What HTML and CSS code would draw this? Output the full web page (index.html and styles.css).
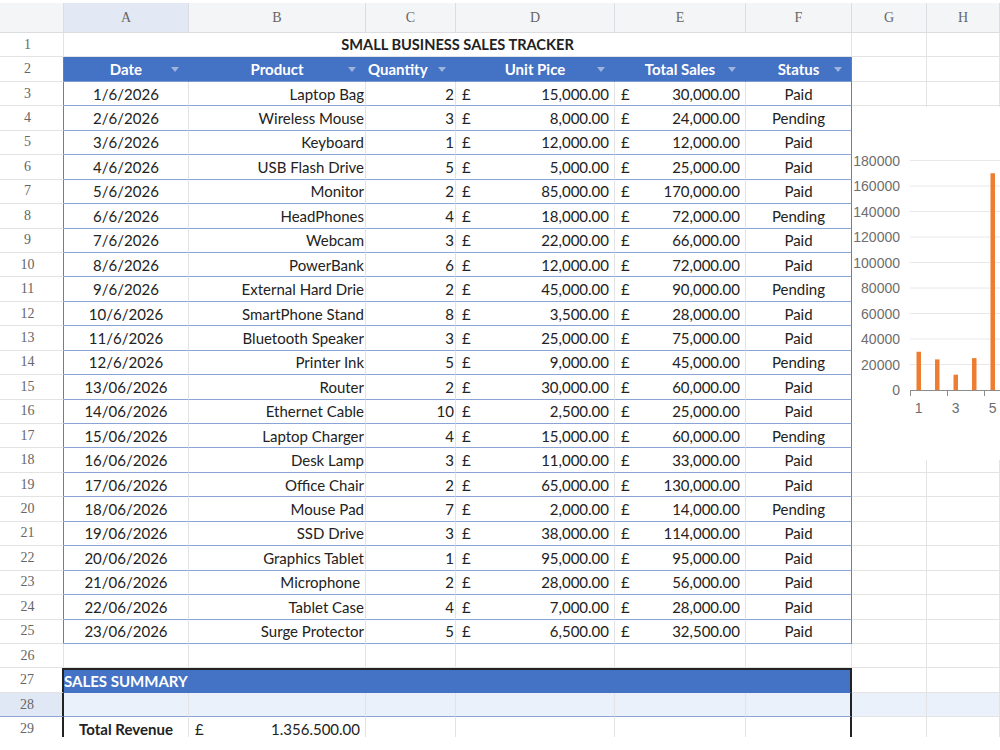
FILE: index.html
```html
<!DOCTYPE html>
<html>
<head>
  <meta charset="UTF-8">
  <title>Small Business Sales Tracker</title>
  <link rel="stylesheet" href="styles.css">
</head>
<body>
  <div class="sheet">
    <div class="row cols">
      <div class="rh"></div>
      <div class="sel">A</div><div>B</div><div>C</div><div>D</div><div>E</div><div>F</div><div>G</div><div>H</div>
    </div>

    <div class="row">
      <div class="rh">1</div>
      <div class="title">SMALL BUSINESS SALES TRACKER</div>
      <div></div><div></div>
    </div>

    <div class="row head">
      <div class="rh">2</div>
      <div>Date<i class="dd"></i></div>
      <div>Product<i class="dd"></i></div>
      <div class="squeeze">Quantity<i class="dd"></i></div>
      <div>Unit Pice<i class="dd"></i></div>
      <div>Total Sales<i class="dd"></i></div>
      <div class="f">Status<i class="dd"></i></div>
      <div></div><div></div>
    </div>

    <div class="row data"><div class="rh">3</div><div class="c">1/6/2026</div><div class="r">Laptop Bag</div><div class="r">2</div><div class="m"><span>£</span><span>15,000.00</span></div><div class="m"><span>£</span><span>30,000.00</span></div><div class="c f">Paid</div><div></div><div></div></div>
    <div class="row data"><div class="rh">4</div><div class="c">2/6/2026</div><div class="r">Wireless Mouse</div><div class="r">3</div><div class="m"><span>£</span><span>8,000.00</span></div><div class="m"><span>£</span><span>24,000.00</span></div><div class="c f">Pending</div><div></div><div></div></div>
    <div class="row data"><div class="rh">5</div><div class="c">3/6/2026</div><div class="r">Keyboard</div><div class="r">1</div><div class="m"><span>£</span><span>12,000.00</span></div><div class="m"><span>£</span><span>12,000.00</span></div><div class="c f">Paid</div><div></div><div></div></div>
    <div class="row data"><div class="rh">6</div><div class="c">4/6/2026</div><div class="r">USB Flash Drive</div><div class="r">5</div><div class="m"><span>£</span><span>5,000.00</span></div><div class="m"><span>£</span><span>25,000.00</span></div><div class="c f">Paid</div><div></div><div></div></div>
    <div class="row data"><div class="rh">7</div><div class="c">5/6/2026</div><div class="r">Monitor</div><div class="r">2</div><div class="m"><span>£</span><span>85,000.00</span></div><div class="m"><span>£</span><span>170,000.00</span></div><div class="c f">Paid</div><div></div><div></div></div>
    <div class="row data"><div class="rh">8</div><div class="c">6/6/2026</div><div class="r">HeadPhones</div><div class="r">4</div><div class="m"><span>£</span><span>18,000.00</span></div><div class="m"><span>£</span><span>72,000.00</span></div><div class="c f">Pending</div><div></div><div></div></div>
    <div class="row data"><div class="rh">9</div><div class="c">7/6/2026</div><div class="r">Webcam</div><div class="r">3</div><div class="m"><span>£</span><span>22,000.00</span></div><div class="m"><span>£</span><span>66,000.00</span></div><div class="c f">Paid</div><div></div><div></div></div>
    <div class="row data"><div class="rh">10</div><div class="c">8/6/2026</div><div class="r">PowerBank</div><div class="r">6</div><div class="m"><span>£</span><span>12,000.00</span></div><div class="m"><span>£</span><span>72,000.00</span></div><div class="c f">Paid</div><div></div><div></div></div>
    <div class="row data"><div class="rh">11</div><div class="c">9/6/2026</div><div class="r">External Hard Drie</div><div class="r">2</div><div class="m"><span>£</span><span>45,000.00</span></div><div class="m"><span>£</span><span>90,000.00</span></div><div class="c f">Pending</div><div></div><div></div></div>
    <div class="row data"><div class="rh">12</div><div class="c">10/6/2026</div><div class="r">SmartPhone Stand</div><div class="r">8</div><div class="m"><span>£</span><span>3,500.00</span></div><div class="m"><span>£</span><span>28,000.00</span></div><div class="c f">Paid</div><div></div><div></div></div>
    <div class="row data"><div class="rh">13</div><div class="c">11/6/2026</div><div class="r">Bluetooth Speaker</div><div class="r">3</div><div class="m"><span>£</span><span>25,000.00</span></div><div class="m"><span>£</span><span>75,000.00</span></div><div class="c f">Paid</div><div></div><div></div></div>
    <div class="row data"><div class="rh">14</div><div class="c">12/6/2026</div><div class="r">Printer Ink</div><div class="r">5</div><div class="m"><span>£</span><span>9,000.00</span></div><div class="m"><span>£</span><span>45,000.00</span></div><div class="c f">Pending</div><div></div><div></div></div>
    <div class="row data"><div class="rh">15</div><div class="c">13/06/2026</div><div class="r">Router</div><div class="r">2</div><div class="m"><span>£</span><span>30,000.00</span></div><div class="m"><span>£</span><span>60,000.00</span></div><div class="c f">Paid</div><div></div><div></div></div>
    <div class="row data"><div class="rh">16</div><div class="c">14/06/2026</div><div class="r">Ethernet Cable</div><div class="r">10</div><div class="m"><span>£</span><span>2,500.00</span></div><div class="m"><span>£</span><span>25,000.00</span></div><div class="c f">Paid</div><div></div><div></div></div>
    <div class="row data"><div class="rh">17</div><div class="c">15/06/2026</div><div class="r">Laptop Charger</div><div class="r">4</div><div class="m"><span>£</span><span>15,000.00</span></div><div class="m"><span>£</span><span>60,000.00</span></div><div class="c f">Pending</div><div></div><div></div></div>
    <div class="row data"><div class="rh">18</div><div class="c">16/06/2026</div><div class="r">Desk Lamp</div><div class="r">3</div><div class="m"><span>£</span><span>11,000.00</span></div><div class="m"><span>£</span><span>33,000.00</span></div><div class="c f">Paid</div><div></div><div></div></div>
    <div class="row data"><div class="rh">19</div><div class="c">17/06/2026</div><div class="r">Office Chair</div><div class="r">2</div><div class="m"><span>£</span><span>65,000.00</span></div><div class="m"><span>£</span><span>130,000.00</span></div><div class="c f">Paid</div><div></div><div></div></div>
    <div class="row data"><div class="rh">20</div><div class="c">18/06/2026</div><div class="r">Mouse Pad</div><div class="r">7</div><div class="m"><span>£</span><span>2,000.00</span></div><div class="m"><span>£</span><span>14,000.00</span></div><div class="c f">Pending</div><div></div><div></div></div>
    <div class="row data"><div class="rh">21</div><div class="c">19/06/2026</div><div class="r">SSD Drive</div><div class="r">3</div><div class="m"><span>£</span><span>38,000.00</span></div><div class="m"><span>£</span><span>114,000.00</span></div><div class="c f">Paid</div><div></div><div></div></div>
    <div class="row data"><div class="rh">22</div><div class="c">20/06/2026</div><div class="r">Graphics Tablet</div><div class="r">1</div><div class="m"><span>£</span><span>95,000.00</span></div><div class="m"><span>£</span><span>95,000.00</span></div><div class="c f">Paid</div><div></div><div></div></div>
    <div class="row data"><div class="rh">23</div><div class="c">21/06/2026</div><div class="r">Microphone&nbsp;</div><div class="r">2</div><div class="m"><span>£</span><span>28,000.00</span></div><div class="m"><span>£</span><span>56,000.00</span></div><div class="c f">Paid</div><div></div><div></div></div>
    <div class="row data"><div class="rh">24</div><div class="c">22/06/2026</div><div class="r">Tablet Case</div><div class="r">4</div><div class="m"><span>£</span><span>7,000.00</span></div><div class="m"><span>£</span><span>28,000.00</span></div><div class="c f">Paid</div><div></div><div></div></div>
    <div class="row data"><div class="rh">25</div><div class="c">23/06/2026</div><div class="r">Surge Protector</div><div class="r">5</div><div class="m"><span>£</span><span>6,500.00</span></div><div class="m"><span>£</span><span>32,500.00</span></div><div class="c f">Paid</div><div></div><div></div></div>

    <div class="row">
      <div class="rh">26</div>
      <div></div><div></div><div></div><div></div><div></div><div></div><div></div><div></div>
    </div>

    <div class="row summary">
      <div class="rh">27</div>
      <div class="band">SALES SUMMARY</div>
      <div></div><div></div>
    </div>

    <div class="row summary picked">
      <div class="rh">28</div>
      <div></div><div></div><div></div><div></div><div></div><div class="f"></div><div></div><div></div>
    </div>

    <div class="row summary">
      <div class="rh">29</div>
      <div class="c bold">Total Revenue</div>
      <div class="m"><span>£</span><span>1.356.500.00</span></div>
      <div></div><div></div><div></div><div class="f"></div><div></div><div></div>
    </div>

    <!-- floating bar chart of total sales per row -->
    <div class="chart">
      <svg width="148" height="353" viewBox="0 0 148 353">
        <g class="grid">
          <line x1="58" y1="53.5" x2="148" y2="53.5"/>
          <line x1="58" y1="79" x2="148" y2="79"/>
          <line x1="58" y1="104.5" x2="148" y2="104.5"/>
          <line x1="58" y1="130" x2="148" y2="130"/>
          <line x1="58" y1="155.5" x2="148" y2="155.5"/>
          <line x1="58" y1="181" x2="148" y2="181"/>
          <line x1="58" y1="206.5" x2="148" y2="206.5"/>
          <line x1="58" y1="232" x2="148" y2="232"/>
          <line x1="58" y1="257.5" x2="148" y2="257.5"/>
        </g>
        <g class="ylab">
          <text x="48" y="58.5">180000</text>
          <text x="48" y="84">160000</text>
          <text x="48" y="109.5">140000</text>
          <text x="48" y="135">120000</text>
          <text x="48" y="160.5">100000</text>
          <text x="48" y="186">80000</text>
          <text x="48" y="211.5">60000</text>
          <text x="48" y="237">40000</text>
          <text x="48" y="262.5">20000</text>
          <text x="48" y="288">0</text>
        </g>
        <g class="bars">
          <rect x="64.5" y="244.75" width="4.5" height="38.25"/>
          <rect x="83" y="252.4" width="4.5" height="30.6"/>
          <rect x="101.5" y="267.7" width="4.5" height="15.3"/>
          <rect x="120" y="251.1" width="4.5" height="31.9"/>
          <rect x="138.5" y="66.25" width="4.5" height="216.75"/>
        </g>
        <g class="axis">
          <line x1="58" y1="283.5" x2="148" y2="283.5"/>
          <line x1="58.5" y1="283" x2="58.5" y2="289"/>
          <line x1="95.5" y1="283" x2="95.5" y2="289"/>
          <line x1="132.5" y1="283" x2="132.5" y2="289"/>
        </g>
        <g class="xlab">
          <text x="66.75" y="306">1</text>
          <text x="103.75" y="306">3</text>
          <text x="140.75" y="306">5</text>
        </g>
      </svg>
    </div>
  </div>
</body>
</html>
```

FILE: styles.css
```css
body {
  margin: 0;
  background: #fff;
  font-family: Lato, "Liberation Sans", sans-serif;
  font-size: 15px;
  color: #222;
}

.sheet {
  position: relative;
  height: 737px;
  padding-top: 3px;
  box-sizing: border-box;
  overflow: hidden;
}

/* every sheet row shares the same column widths */
.row {
  display: grid;
  grid-template-columns: 64px 125px 177px 90px 159px 131px 106px 75px 73px;
  height: 24.45px;
}
.row > div {
  display: flex;
  align-items: center;
  min-width: 0;
  overflow: hidden;
  white-space: nowrap;
  box-sizing: border-box;
  border-right: 1px solid #e3e3e3;
  border-bottom: 1px solid #e3e3e3;
}

/* column letters */
.cols {
  height: 30px;
  background: #f4f5f7;
}
.cols > div {
  justify-content: center;
  font-family: "Liberation Serif", serif;
  font-size: 14px;
  color: #666;
  border-color: #dcdde0;
}
.cols .sel {
  background: #e2e9f5;
}

/* row numbers */
.row .rh {
  justify-content: center;
  padding-right: 8px;
  font-family: "Liberation Serif", serif;
  font-size: 14px;
  color: #666;
  background: #fff;
}
.cols .rh {
  background: #f4f5f7;
}

.title {
  grid-column: 2 / 8;
  justify-content: center;
  font-weight: bold;
  font-size: 14.6px;
}

/* table header with filter buttons */
.head > div:not(.rh) {
  position: relative;
  justify-content: center;
}
.head > div:nth-child(n+2):nth-child(-n+7) {
  background: #4472c4;
  color: #fff;
  font-weight: bold;
  border-right-color: #4472c4;
  border-bottom-color: #7d9ad0;
}
.head > .f {
  border-right-color: #5b7ec6 !important;
}
.head > div.squeeze {
  justify-content: flex-start;
  padding-left: 2px;
}
.head .rh {
  border-right-color: #5b7ec6;
}
.dd {
  position: absolute;
  right: 9px;
  top: 10px;
  border-left: 4px solid transparent;
  border-right: 4px solid transparent;
  border-top: 5px solid #9fb4dd;
}

/* data rows */
.data > div {
  border-bottom-color: #8aa4d6;
}
.data > div:nth-child(n+8) {
  border-bottom-color: #e3e3e3;
}
.data .rh {
  border-bottom-color: #e3e3e3;
  border-right-color: #5b7ec6;
}
.data .f {
  border-right-color: #5b7ec6;
}
.c {
  justify-content: center;
}
.r {
  justify-content: flex-end;
  padding-right: 1px;
}
.m {
  justify-content: space-between;
  padding: 0 5px 0 6px;
}
.bold {
  font-weight: bold;
}

/* summary block */
.summary .rh {
  border-right: 2px solid #222;
}
.summary .f {
  border-right: 2px solid #222;
}
.band {
  grid-column: 2 / 8;
  background: #4472c4;
  color: #fff;
  font-weight: bold;
  border-top: 2px solid #222;
  border-right: 2px solid #222 !important;
  border-bottom-color: #4472c4 !important;
}
.picked > div {
  background: #ebf1fb;
}
.picked > div:nth-child(-n+7) {
  border-bottom-color: #8aa4d6;
}
.picked .rh {
  background: #e0e8f5;
  border-bottom-color: #e3e3e3;
}

/* chart */
.chart {
  position: absolute;
  left: 852px;
  top: 107px;
  width: 148px;
  height: 353px;
  background: #fff;
  overflow: hidden;
}
.chart svg {
  display: block;
}
.grid line {
  stroke: #e8e8e8;
  stroke-width: 1;
}
.axis line {
  stroke: #8c8c8c;
  stroke-width: 1;
}
.bars rect {
  fill: #ed7d31;
}
.ylab text,
.xlab text {
  font-family: "Liberation Sans", sans-serif;
  font-size: 14px;
  fill: #6e6e6e;
}
.ylab text {
  text-anchor: end;
}
.xlab text {
  text-anchor: middle;
}
```
